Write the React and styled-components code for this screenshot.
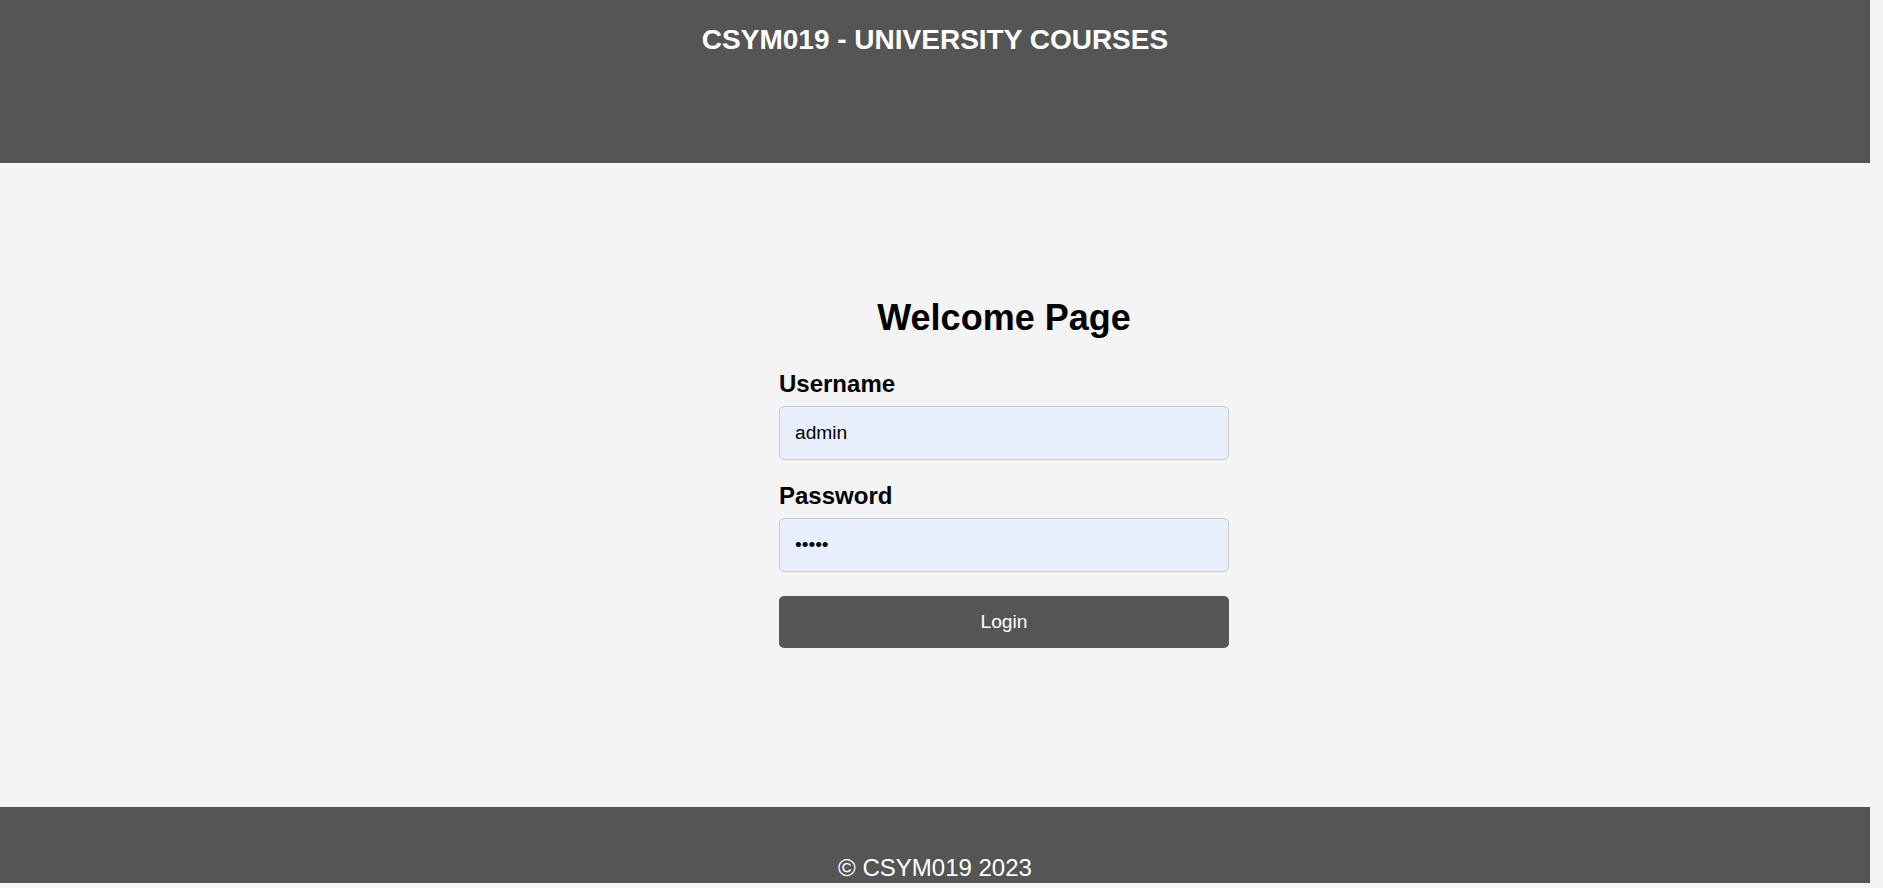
import React from "react";
import styled, { createGlobalStyle } from "styled-components";

const GlobalStyle = createGlobalStyle`
  html, body {
    margin: 0;
    padding: 0;
    background: #f4f4f4;
    font-family: "Liberation Sans", Arial, sans-serif;
    color: #000;
  }
  * { box-sizing: border-box; }
`;

const Page = styled.div`
  margin-right: 13px;
  display: flex;
  flex-direction: column;
`;

const Header = styled.header`
  height: 163px;
  background: #555555;
  padding-top: 24px;
  text-align: center;
`;

const SiteTitle = styled.h1`
  margin: 0;
  font-size: 28px;
  line-height: 32px;
  font-weight: 700;
  color: #ffffff;
`;

const Main = styled.main`
  min-height: 644px;
  padding-top: 133.5px;
  padding-left: 138px;
  display: flex;
  justify-content: center;
  align-items: flex-start;
`;

const Form = styled.form`
  width: 450px;
  display: flex;
  flex-direction: column;
`;

const Heading = styled.h2`
  margin: 0 0 31px;
  font-size: 36px;
  line-height: 42px;
  font-weight: 700;
  text-align: center;
`;

const Label = styled.label`
  display: block;
  font-size: 24px;
  line-height: 28px;
  font-weight: 700;
  margin-bottom: 8px;
`;

const Input = styled.input`
  display: block;
  width: 100%;
  height: 54px;
  margin: 0 0 ${(p) => p.$gap}px;
  padding: 0 15px;
  border: 1px solid #cccccc;
  border-radius: 5px;
  background: #e8f0fe;
  font-family: "Liberation Sans", Arial, sans-serif;
  font-size: 19.2px;
  color: #000;
  outline: none;
`;

const Button = styled.button`
  display: block;
  width: 100%;
  height: 52px;
  border: none;
  border-radius: 5px;
  background: #555555;
  color: #ffffff;
  font-family: "Liberation Sans", Arial, sans-serif;
  font-size: 19.2px;
  cursor: pointer;
`;

const Footer = styled.footer`
  height: 76px;
  background: #555555;
  padding-top: 47px;
  text-align: center;
  color: #ffffff;
  font-size: 24px;
  line-height: 28px;
`;

export default function App() {
  return (
    <>
      <GlobalStyle />
      <Page>
        <Header>
          <SiteTitle>CSYM019 - UNIVERSITY COURSES</SiteTitle>
        </Header>
        <Main>
          <Form onSubmit={(e) => e.preventDefault()}>
            <Heading>Welcome Page</Heading>
            <Label htmlFor="username">Username</Label>
            <Input id="username" type="text" defaultValue="admin" $gap={22.5} />
            <Label htmlFor="password">Password</Label>
            <Input id="password" type="password" defaultValue="admin" $gap={24} />
            <Button type="submit">Login</Button>
          </Form>
        </Main>
        <Footer>© CSYM019 2023</Footer>
      </Page>
    </>
  );
}
